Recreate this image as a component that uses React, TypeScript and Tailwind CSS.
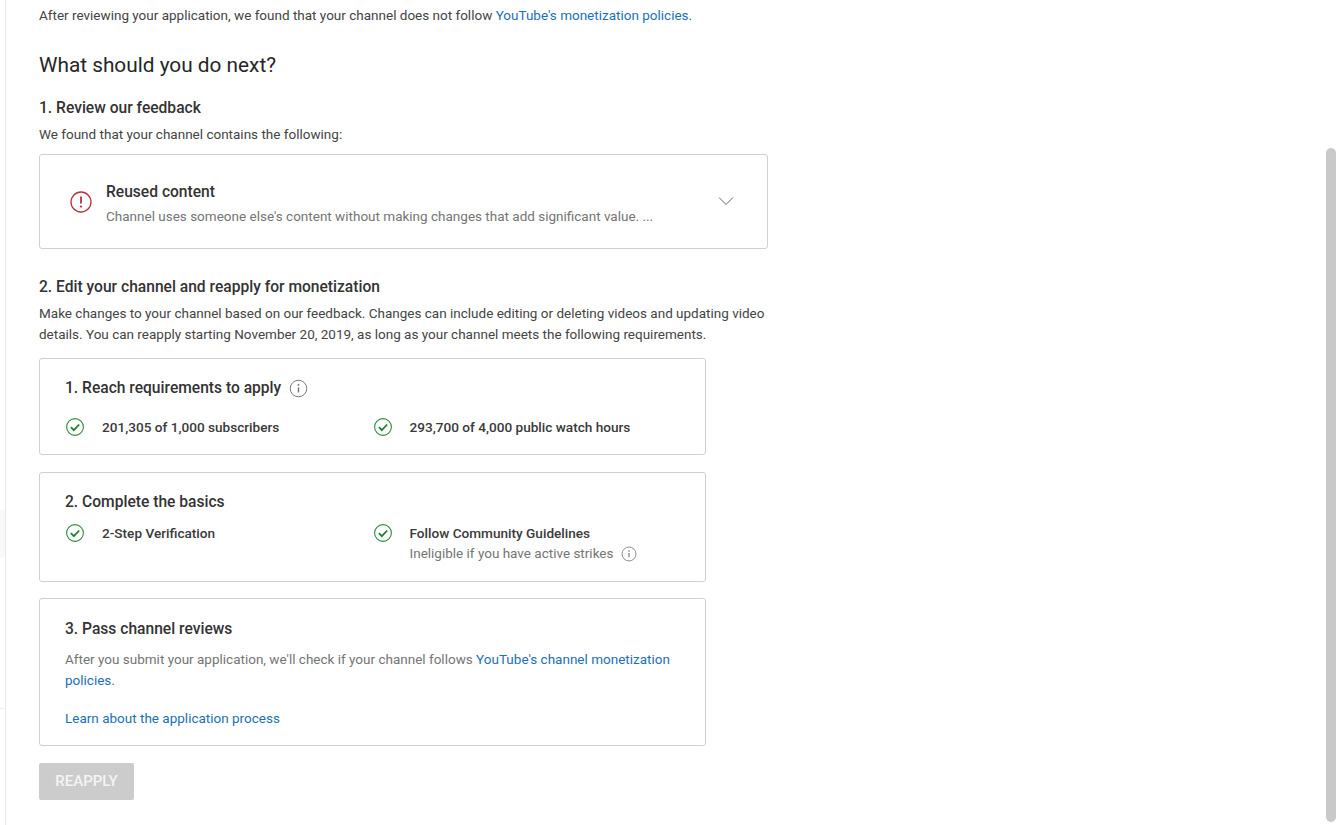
const font = { fontFamily: "Roboto, 'Liberation Sans', sans-serif" };

function CheckIcon() {
  return (
    <svg width="20" height="20" viewBox="0 0 20 20" fill="none" className="shrink-0">
      <circle cx="10" cy="10" r="8.4" stroke="#2e8b3d" strokeWidth="1.1" />
      <path d="M5.9 10.2l2.9 2.9 5.4-5.6" stroke="#1f7f30" strokeWidth="1.8" />
    </svg>
  );
}

function InfoIcon({ size = 20 }: { size?: number }) {
  return (
    <svg width={size} height={size} viewBox="0 0 20 20" fill="none" className="shrink-0">
      <circle cx="10" cy="10" r="8.7" stroke="#707070" strokeWidth="1" />
      <path d="M10 8.8v5.4" stroke="#707070" strokeWidth="1.4" />
      <circle cx="10" cy="6.2" r="1" fill="#707070" />
    </svg>
  );
}

function AlertIcon() {
  return (
    <svg width="22" height="22" viewBox="0 0 22 22" fill="none">
      <circle cx="11" cy="11" r="10" stroke="#b8313a" strokeWidth="1.3" />
      <path d="M11 5.5v7" stroke="#b8313a" strokeWidth="1.8" />
      <circle cx="11" cy="15.6" r="1.1" fill="#b8313a" />
    </svg>
  );
}

function Req({ children }: { children: React.ReactNode }) {
  return (
    <div className="flex w-[307.5px] items-start">
      <CheckIcon />
      <div className="ml-[17px]">{children}</div>
    </div>
  );
}

export default function App() {
  return (
    <div style={font} className="relative flex h-[825px] w-[1339px] overflow-hidden bg-white text-[13.5px] text-[#0d0d0d]">
      <div className="flex h-full w-[6px] shrink-0 flex-col border-r border-[#e8e8e8]">
        <div className="mt-[510px] h-[47px] bg-[#f9f9f9]" />
        <div className="mt-[151px] h-px bg-[#eeeeee]" />
      </div>

      <main className="pl-[33px]">
        <p className="mt-[5px] leading-[20px] text-[#444444]">
          After reviewing your application, we found that your channel does not follow{" "}
          <a className="text-[#1d6fb8]">YouTube's monetization policies.</a>
        </p>

        <h1 className="mt-[26px] text-[20.8px] leading-[28px] text-[#262626]">What should you do next?</h1>

        <h2 className="mt-[19px] text-[15.6px] leading-[20px] font-medium text-[#333333]">1. Review our feedback</h2>
        <p className="mt-[6px] leading-[20px] text-[#444444]">We found that your channel contains the following:</p>

        <div className="mt-[10px] flex h-[95px] w-[729px] items-center rounded-[3px] border border-[#d0d0d0] pr-[33px] pl-[30px]">
          <AlertIcon />
          <div className="ml-[14px] flex-1 pt-[4px]">
            <div className="text-[15.6px] leading-[20px] font-medium text-[#333333]">Reused content</div>
            <div className="mt-[4px] leading-[20px] text-[#757575]">
              Channel uses someone else's content without making changes that add significant value. ...
            </div>
          </div>
          <svg width="16" height="10" viewBox="0 0 16 10" fill="none" className="mb-[2px]">
            <path d="M1 1.5l7 7 7-7" stroke="#666666" strokeWidth="1" />
          </svg>
        </div>

        <h2 className="mt-[28px] text-[15.6px] leading-[20px] font-medium text-[#333333]">
          2. Edit your channel and reapply for monetization
        </h2>
        <p className="mt-[6px] w-[740px] leading-[21px] text-[#444444]">
          Make changes to your channel based on our feedback. Changes can include editing or deleting videos and updating video
          details. You can reapply starting November 20, 2019, as long as your channel meets the following requirements.
        </p>

        <section className="mt-[13px] h-[97px] w-[667px] rounded-[3px] border border-[#d0d0d0] pt-[19px] pl-[25px]">
          <div className="flex items-center">
            <h3 className="text-[15.6px] leading-[20px] font-medium text-[#333333]">1. Reach requirements to apply</h3>
            <span className="ml-[8px]">
              <InfoIcon size={19} />
            </span>
          </div>
          <div className="mt-[19px] flex">
            <Req>
              <span className="text-[13.6px] leading-[20px] font-medium text-[#3a3a3a]">201,305 of 1,000 subscribers</span>
            </Req>
            <Req>
              <span className="text-[13.6px] leading-[20px] font-medium text-[#3a3a3a]">293,700 of 4,000 public watch hours</span>
            </Req>
          </div>
        </section>

        <section className="mt-[17px] h-[110px] w-[667px] rounded-[3px] border border-[#d0d0d0] pt-[19px] pl-[25px]">
          <h3 className="text-[15.6px] leading-[20px] font-medium text-[#333333]">2. Complete the basics</h3>
          <div className="mt-[11px] flex">
            <Req>
              <span className="text-[13.6px] leading-[20px] font-medium text-[#3a3a3a]">2-Step Verification</span>
            </Req>
            <Req>
              <div className="text-[13.6px] leading-[20px] font-medium text-[#3a3a3a]">Follow Community Guidelines</div>
              <div className="flex items-center leading-[20px] text-[#757575]">
                Ineligible if you have active strikes
                <span className="mt-[2px] ml-[8px]">
                  <InfoIcon size={16} />
                </span>
              </div>
            </Req>
          </div>
        </section>

        <section className="mt-[16px] h-[148px] w-[667px] rounded-[3px] border border-[#d0d0d0] pt-[20px] pl-[25px]">
          <h3 className="text-[15.6px] leading-[20px] font-medium text-[#333333]">3. Pass channel reviews</h3>
          <p className="mt-[10px] w-[620px] leading-[21px] text-[#757575]">
            After you submit your application, we'll check if your channel follows{" "}
            <a className="text-[#1d6fb8]">YouTube's channel monetization policies.</a>
          </p>
          <a className="mt-[17px] block leading-[20px] text-[#1d6fb8]">Learn about the application process</a>
        </section>

        <button className="mt-[17px] h-[37px] w-[95px] rounded-[2px] bg-[#cccccc] text-[15px] font-medium text-[#f4f4f4]">
          REAPPLY
        </button>
      </main>

      {/* scrollbar thumb sits on top of the page */}
      <div className="absolute top-[148px] right-[3px] h-[674px] w-[10px] rounded-full bg-[#c9c9c9]" />
    </div>
  );
}
